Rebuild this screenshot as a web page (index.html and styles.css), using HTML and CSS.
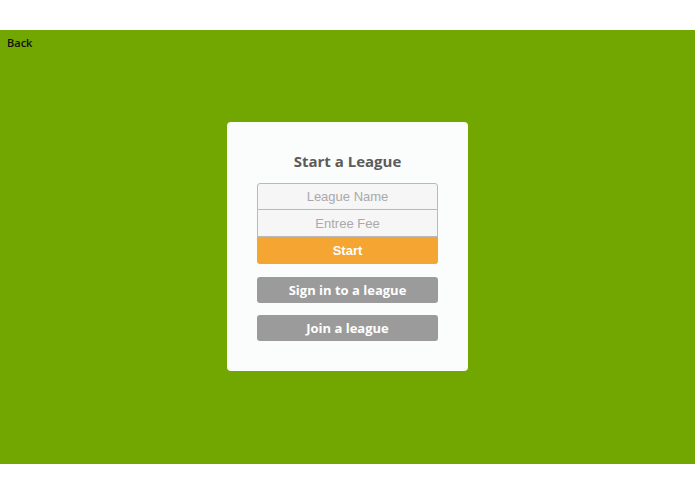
FILE: index.html
```html
<!DOCTYPE html>
<html>
<head>
<meta charset="utf-8">
<link rel="stylesheet" href="styles.css">
</head>
<body>
<div class="top"></div>
<main class="stage">
  <a class="back" href="#">Back</a>
  <div class="card">
    <h1 class="title">Start a League</h1>
    <form class="form">
      <input class="field" type="text" placeholder="League Name">
      <input class="field field-second" type="text" placeholder="Entree Fee">
      <button class="start" type="button">Start</button>
    </form>
    <button class="grey-btn" type="button">Sign in to a league</button>
    <button class="grey-btn join" type="button">Join a league</button>
  </div>
</main>
</body>
</html>
```
FILE: styles.css
```css
html, body {
  margin: 0;
  padding: 0;
  background: #ffffff;
}
body {
  font-family: "Open Sans", "Liberation Sans", sans-serif;
}
.top {
  height: 30px;
}
.stage {
  position: relative;
  box-sizing: border-box;
  height: 434px;
  padding-top: 92px;
  background: #72a600;
  display: flex;
  align-items: flex-start;
  justify-content: center;
}
.back {
  position: absolute;
  left: 7px;
  top: 5px;
  font-family: "Open Sans", sans-serif;
  font-weight: 600;
  font-size: 11px;
  color: #111;
  text-decoration: none;
}
.card {
  box-sizing: border-box;
  width: 241px;
  height: 249px;
  background: #fbfcfc;
  border-radius: 4px;
  padding: 28px 30px 0;
  display: flex;
  flex-direction: column;
}
.title {
  margin: 0;
  height: 33px;
  text-align: center;
  font-family: "Open Sans", sans-serif;
  font-weight: 700;
  font-size: 15px;
  line-height: 22px;
  color: #5b5b5b;
}
.form {
  display: flex;
  flex-direction: column;
  margin: 0;
}
.field {
  box-sizing: border-box;
  height: 27px;
  margin: 0;
  border: 1px solid #b9b9b9;
  border-radius: 3px 3px 0 0;
  background: #f6f6f6;
  text-align: center;
  font-family: "Liberation Sans", Arial, sans-serif;
  font-size: 13px;
  color: #555;
  outline: none;
}
.field-second {
  border-top: none;
  border-radius: 0;
}
.field::placeholder {
  color: #a9a9a9;
}
.start {
  height: 27px;
  margin: 0;
  border: none;
  border-radius: 0 0 3px 3px;
  background: #f5a531;
  color: #fff;
  font-family: "Liberation Sans", Arial, sans-serif;
  font-size: 13px;
  font-weight: 700;
}
.grey-btn {
  height: 26px;
  margin: 13px 0 0;
  border: none;
  border-radius: 3px;
  background: #9b9b9b;
  color: #fff;
  font-family: "Open Sans", sans-serif;
  font-weight: 700;
  font-size: 13px;
  padding: 0;
}
.join {
  margin-top: 12px;
}
```
